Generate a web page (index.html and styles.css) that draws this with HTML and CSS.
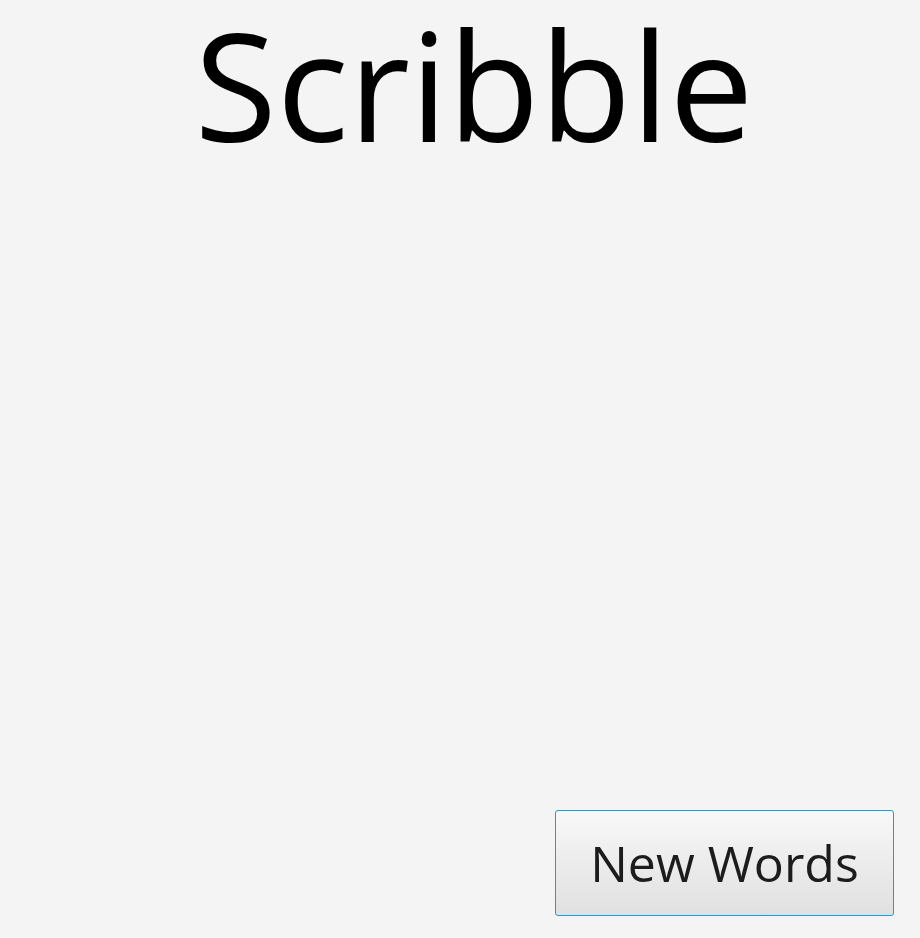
FILE: index.html
```html
<!DOCTYPE html>
<html>
<head>
<meta charset="utf-8">
<link rel="stylesheet" href="styles.css">
</head>
<body>
<div class="app">
  <h1 class="title">Scribble</h1>
  <div class="canvas"></div>
  <div class="actions">
    <button class="btn">New Words</button>
  </div>
</div>
</body>
</html>
```

FILE: styles.css
```css
html, body {
  margin: 0;
  padding: 0;
  background: #f4f4f4;
}
.app {
  width: 920px;
  height: 938px;
  display: flex;
  flex-direction: column;
  font-family: "Open Sans", "Noto Sans", sans-serif;
}
.title {
  margin: 0;
  padding: 3px 0 0 28px;
  text-align: center;
  font-weight: 400;
  font-size: 150px;
  line-height: 162px;
  color: #000;
}
.canvas {
  flex: 1;
}
.actions {
  display: flex;
  justify-content: flex-end;
  padding: 0 26px 22px 0;
}
.btn {
  width: 339px;
  height: 106px;
  border: 1px solid #14a0d8;
  border-radius: 3px;
  background: linear-gradient(#f8f8f8, #e0e0e0);
  font-family: "Open Sans", "Noto Sans", sans-serif;
  font-size: 50px;
  color: #1c1c1c;
  padding: 0;
}
```
